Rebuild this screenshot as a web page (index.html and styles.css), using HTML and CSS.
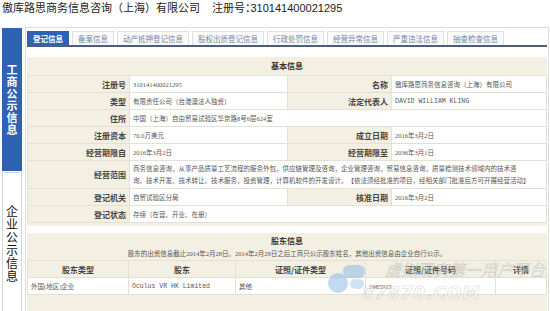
FILE: index.html
```html
<!DOCTYPE html>
<html lang="zh-CN">
<head>
    <meta charset="UTF-8">
    <meta name="viewport" content="width=device-width, initial-scale=1.0">
    <title>企业信用信息公示</title>
    <link rel="stylesheet" href="styles.css">
</head>
<body>

    <div class="top">
        <span class="company">傲库路思商务信息咨询（上海）有限公司</span>
        <span class="reg-no">注册号：310141400021295</span>
    </div>

    <div class="layout">
        <div class="side">
            <div class="side-item active"><span>工商公示信息</span></div>
            <div class="side-item"><span>企业公示信息</span></div>
        </div>

        <div class="panel">
            <ul class="tabs">
                <li class="active">登记信息</li>
                <li>备案信息</li>
                <li>动产抵押登记信息</li>
                <li>股权出质登记信息</li>
                <li>行政处罚信息</li>
                <li>经营异常信息</li>
                <li>严重违法信息</li>
                <li>抽查检查信息</li>
            </ul>

            <!-- 基本信息 -->
            <div class="info-box">
                <h3>基本信息</h3>
                <table class="info-table">
                    <colgroup>
                        <col class="c-label"><col class="c-value"><col class="c-label2"><col>
                    </colgroup>
                    <tr>
                        <th>注册号</th><td>310141400021295</td>
                        <th>名称</th><td>傲库路思商务信息咨询（上海）有限公司</td>
                    </tr>
                    <tr>
                        <th>类型</th><td>有限责任公司（台港澳法人独资）</td>
                        <th>法定代表人</th><td class="latin">DAVID WILLIAM KLING</td>
                    </tr>
                    <tr>
                        <th>住所</th><td colspan="3">中国（上海）自由贸易试验区华京路8号6层624室</td>
                    </tr>
                    <tr>
                        <th>注册资本</th><td>70.0万美元</td>
                        <th>成立日期</th><td>2016年3月2日</td>
                    </tr>
                    <tr>
                        <th>经营期限自</th><td>2016年3月2日</td>
                        <th>经营期限至</th><td>2036年3月1日</td>
                    </tr>
                    <tr class="scope">
                        <th>经营范围</th>
                        <td colspan="3">商务信息咨询，从事产品质量工艺流程的服务外包，供应链管理及咨询，企业管理咨询，贸易信息咨询，质量检测技术领域内的技术咨<br>询、技术开发、技术转让、技术服务，投资管理，计算机软件的开发设计。　【依法须经批准的项目，经相关部门批准后方可开展经营活动】</td>
                    </tr>
                    <tr>
                        <th>登记机关</th><td>自贸试验区分局</td>
                        <th>核准日期</th><td>2016年3月2日</td>
                    </tr>
                    <tr>
                        <th>登记状态</th><td colspan="3">存续（在营、开业、在册）</td>
                    </tr>
                </table>
            </div>

            <!-- 股东信息 -->
            <div class="info-box holders">
                <h3>股东信息</h3>
                <p class="note">股东的出资信息截止2014年2月28日。2014年2月28日之后工商只公示股东姓名，其他出资信息由企业自行公示。</p>
                <table class="holder-table">
                    <colgroup>
                        <col class="h1"><col class="h2"><col class="h3"><col class="h4"><col>
                    </colgroup>
                    <tr>
                        <th>股东类型</th><th>股东</th><th>证照/证件类型</th><th>证照/证件号码</th><th>详情</th>
                    </tr>
                    <tr>
                        <td>外国(地区)企业</td><td class="latin">Oculus VR HK Limited</td><td>其他</td><td>1985915</td><td></td>
                    </tr>
                </table>
            </div>
        </div>
    </div>

    <!-- 水印 -->
    <div class="watermark">
        <svg class="wm-logo" width="38" height="30" viewBox="0 0 38 30">
            <circle cx="10" cy="18" r="10" fill="#8fbbe6"/>
            <rect x="15" y="0" width="22" height="13" rx="6" fill="#8fbbe6"/>
            <rect x="22" y="14" width="14" height="10" rx="5" fill="#a9cdee"/>
        </svg>
        <span class="wm-cn">虚拟现实第一用户平台</span>
        <span class="wm-en">87870.COM</span>
    </div>

</body>
</html>
```

FILE: styles.css
```css
html, body {
    margin: 0;
    overflow: hidden;
}
body {
    width: 550px;
    height: 311px;
    background: #fff;
    font-family: "Liberation Sans", "Noto Sans CJK SC", sans-serif;
    color: #222;
}

/* cabeçalho */
.top {
    display: flex;
    height: 27px;
    padding-left: 2px;
    font-size: 11px;
    line-height: 17px;
}
.reg-no {
    margin-left: 12px;
    font-feature-settings: "halt";
}

.layout {
    display: flex;
    gap: 3px;
    padding-left: 2px;
}

/* barra lateral */
.side {
    width: 20px;
    padding-top: 1px;
}
.side-item {
    box-sizing: border-box;
    height: 143px;
    margin-bottom: 1px;
    border: 1px solid #d5d5d5;
    display: flex;
    align-items: center;
    justify-content: center;
    font-family: "Noto Sans CJK SC", sans-serif;
    font-size: 12px;
    color: #111;
}
.side-item span {
    writing-mode: vertical-rl;
    letter-spacing: 1px;
}
.side-item.active {
    background: #2d63b2;
    border-color: #2d63b2;
    color: #fff;
    font-weight: bold;
    font-size: 11px;
}

.panel {
    width: 524px;
    box-sizing: border-box;
    border: 1px solid #dcdcdc;
    border-bottom: none;
    padding: 3px 1px 0 1px;
}

/* abas */
.tabs {
    display: flex;
    gap: 3px;
    list-style: none;
    margin: 0 0 10px 0;
    padding: 0;
    border-bottom: 2px solid #4e5d7c;
}
.tabs li {
    height: 14px;
    line-height: 14px;
    padding: 0 5px;
    font-size: 7.5px;
    color: #7787a6;
    background: #fafafa;
    border: 1px solid #e0e0e0;
    border-bottom: none;
    box-sizing: border-box;
    font-family: "Noto Sans CJK SC", sans-serif;
}
.tabs li.active {
    background: #2d63b2;
    border-color: #2d63b2;
    color: #fff;
    font-weight: bold;
}

/* caixas de informação */
.info-box {
    background: #f3f0e3;
    padding-bottom: 3px;
    margin-bottom: 7px;
    font-family: "Liberation Serif", "Noto Sans CJK SC", serif;
}
.info-box h3 {
    margin: 0;
    height: 18px;
    line-height: 18px;
    font-size: 8px;
    text-align: center;
    color: #333;
    font-family: "Noto Sans CJK SC", sans-serif;
}

table {
    width: 100%;
    border-collapse: collapse;
    table-layout: fixed;
}
.info-table th,
.info-table td,
.holder-table th,
.holder-table td {
    height: 16px;
    border: 1px solid #e3e0d4;
    padding: 0 3px;
    white-space: nowrap;
}
.info-table th {
    text-align: right;
    font-size: 8px;
    font-weight: bold;
    color: #444;
    font-family: "Noto Sans CJK SC", sans-serif;
}
.info-table td {
    background: #fff;
    font-size: 6.5px;
    color: #555;
}
.info-table .scope td {
    height: 27px;
    line-height: 12px;
    white-space: normal;
}
.c-label { width: 102px; }
.c-value { width: 158px; }
.c-label2 { width: 104px; }

.latin {
    font-family: "Liberation Mono", "Noto Sans CJK SC", monospace;
}

/* sócios */
.holders {
    padding-bottom: 20px;
}
.holders h3 {
    height: 16px;
    line-height: 16px;
}
.note {
    margin: 0;
    height: 11px;
    line-height: 10px;
    font-size: 6.5px;
    text-align: center;
    color: #555;
}
.holder-table th {
    font-size: 8px;
    font-weight: bold;
    color: #444;
    font-family: "Noto Sans CJK SC", sans-serif;
}
.holder-table td {
    background: #fff;
    font-size: 6.5px;
    color: #555;
}
.h1 { width: 101px; }
.h2 { width: 107px; }
.h3 { width: 130px; }
.h4 { width: 130px; }

/* marca d'água */
.watermark {
    position: absolute;
    left: 328px;
    top: 261px;
    width: 222px;
    height: 50px;
    opacity: 0.55;
}
.wm-logo {
    position: absolute;
    left: 0;
    top: 4px;
}
.wm-cn,
.wm-en {
    position: absolute;
    white-space: nowrap;
    font-family: "DejaVu Sans", "Noto Sans CJK SC", sans-serif;
    font-style: italic;
    color: rgba(255, 255, 255, 0.6);
    -webkit-text-stroke: 0.6px #b5b5b5;
}
.wm-cn {
    left: 57px;
    top: 0;
    font-size: 16px;
    line-height: 20px;
}
.wm-en {
    left: 34px;
    top: 23px;
    font-size: 17px;
    line-height: 18px;
    font-weight: bold;
    letter-spacing: 1px;
}
```
